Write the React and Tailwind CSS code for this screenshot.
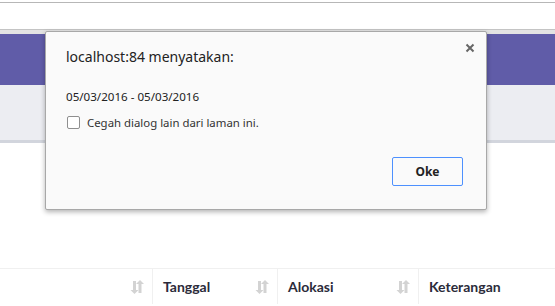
import React from "react";

function SortIcon() {
  return (
    <svg width="14" height="16" viewBox="0 0 14 16" className="text-[#d3d3d3]">
      <path d="M3 2h3v9h2.5L4.5 15 .5 11H3z" fill="currentColor" />
      <path d="M8 5h2.5V14h3V5H16L12 1z" fill="currentColor" transform="translate(-2 0)" />
    </svg>
  );
}

function HeadCell({ label, sort = true, width }) {
  return (
    <div className={`flex items-center justify-between border-r border-[#f0f0f0] pl-[10px] pr-[8px] ${width}`}>
      <span className="text-[14px] font-bold text-[#2b2b3a]">{label}</span>
      {sort && <SortIcon />}
    </div>
  );
}

export default function App() {
  return (
    <div className="relative h-[306px] w-[555px] overflow-hidden bg-white font-['Open_Sans',sans-serif]">
      <div className="h-[3px] border-b border-[#b7b7b7]" />
      <div className="h-[26px] bg-white" />
      <div className="h-[5px] border-t border-[#c4c4c4] bg-[#e3e3e3]" />
      <div className="h-[51px] bg-[#605ca8]" />
      <div className="h-[55px] bg-[#ecedf2]" />
      <div className="h-[3px] bg-[#d2d5dd]" />
      <div className="h-[125px] bg-white" />
      <div className="flex h-[38px] border-t border-[#f0f0f0] pb-[2px] font-['Lato',sans-serif]">
        <HeadCell label="" width="w-[153px]" />
        <HeadCell label="Tanggal" width="w-[125px]" />
        <HeadCell label="Alokasi" width="w-[141px]" />
        <HeadCell label="Keterangan" sort={false} width="flex-1 border-r-0" />
      </div>

      <div className="absolute left-[45px] top-[31px] flex h-[179px] w-[442px] flex-col rounded-[2px] border border-[#a8a8a8] bg-[#fafafa] pl-[20px] pr-[23px] shadow-[0_2px_5px_rgba(0,0,0,0.3)] font-['Noto_Sans',sans-serif]">
        <svg width="10" height="10" viewBox="0 0 10 10" className="absolute right-[11px] top-[11px]">
          <path d="M1.5 1.5l7 7M8.5 1.5l-7 7" stroke="#666" strokeWidth="2" />
        </svg>
        <div className="pt-[14px] text-[14px] text-[#222]">localhost:84 menyatakan:</div>
        <div className="mt-[21px] text-[11.6px] text-[#222]">05/03/2016 - 05/03/2016</div>
        <label className="mt-[9px] flex items-center gap-[7px] text-[11.4px] text-[#333]">
          <span className="ml-[1px] h-[13px] w-[13px] rounded-[2px] border border-[#8f8f8f] bg-white" />
          Cegah dialog lain dari laman ini.
        </label>
        <div className="mt-auto mb-[23px] flex justify-end">
          <button className="h-[29px] w-[71px] rounded-[2px] border border-[#4d90fe] bg-[#fafafa] text-[12px] font-bold text-[#222]">
            Oke
          </button>
        </div>
      </div>
    </div>
  );
}
